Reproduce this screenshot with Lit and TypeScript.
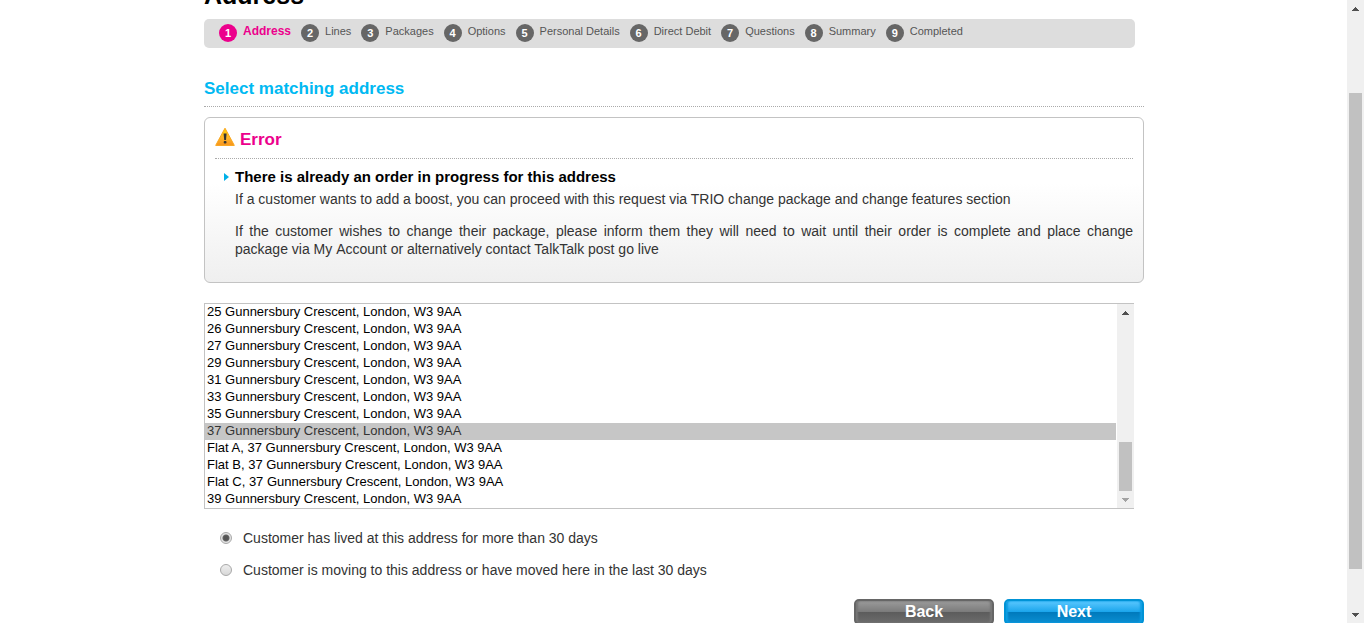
import { LitElement, html, css, svg } from "lit";
import { customElement, property, state } from "lit/decorators.js";
import { classMap } from "lit/directives/class-map.js";

const STEPS = [
  "Address",
  "Lines",
  "Packages",
  "Options",
  "Personal Details",
  "Direct Debit",
  "Questions",
  "Summary",
  "Completed",
];

const STREET = "Gunnersbury Crescent, London, W3 9AA";
const ADDRESSES = [
  "25",
  "26",
  "27",
  "29",
  "31",
  "33",
  "35",
  "37",
  "Flat A, 37",
  "Flat B, 37",
  "Flat C, 37",
  "39",
].map((n) => `${n} ${STREET}`);

const arrow = (up: boolean) => svg`<path d=${up ? "M0 4h7v-1h-1v-1h-1v-1h-1v-1h-1v1h-1v1h-1v1h-1z" : "M0 0h7v1h-1v1h-1v1h-1v1h-1v-1h-1v-1h-1v-1h-1z"} />`;

@customElement("scroll-track")
export class ScrollTrack extends LitElement {
  @property({ type: Number }) before = 0;
  @property({ type: Number }) thumb = 0;
  @property({ type: Number }) after = 0;
  @property({ type: Boolean }) atend = false;

  static styles = css`
    :host {
      display: flex;
      flex-direction: column;
      flex: none;
      width: 17px;
      background: #f0f0f0;
    }
    .end {
      height: 17px;
      flex: none;
      display: flex;
      align-items: center;
      justify-content: center;
    }
    .lane {
      flex: 1;
      display: flex;
      flex-direction: column;
      padding: 0 2px;
    }
    .thumb {
      background: #c1c1c1;
    }
    svg {
      fill: #505050;
    }
    .dim {
      fill: #a3a3a3;
    }
  `;

  render() {
    return html`
      <div class="end"><svg width="7" height="4">${arrow(true)}</svg></div>
      <div class="lane">
        <div style="flex:${this.before}"></div>
        <div class="thumb" style="flex:${this.thumb}"></div>
        <div style="flex:${this.after}"></div>
      </div>
      <div class="end">
        <svg class=${classMap({ dim: this.atend })} width="7" height="4">${arrow(false)}</svg>
      </div>
    `;
  }
}

@customElement("app-root")
export class AppRoot extends LitElement {
  @state() private chosen = 7;

  static styles = css`
    :host {
      display: flex;
      height: 100vh;
      overflow: hidden;
      background: #fff;
      color: #333;
      font: 14px/18px "Liberation Sans", Arial, sans-serif;
    }
    * {
      box-sizing: border-box;
    }
    .view {
      flex: 1;
      min-width: 0;
      padding-left: 1px;
      overflow: hidden;
    }
    main {
      max-width: 940px;
      margin: -19px auto 0;
    }
    h1 {
      margin: 0 0 10px;
      font-size: 25px;
      line-height: 28px;
      color: #000;
    }
    h2 {
      margin: 0;
      font-size: 17px;
      line-height: 24px;
    }
    .steps {
      display: flex;
      gap: 10px;
      list-style: none;
      margin: 0 9px 0 0;
      padding: 5px 15px;
      height: 29px;
      border-radius: 5px;
      background: #ddd;
      font-size: 11px;
      line-height: 15px;
      color: #555;
      white-space: nowrap;
    }
    .step {
      display: flex;
      gap: 6px;
    }
    .num {
      width: 18px;
      height: 18px;
      border-radius: 50%;
      background: #666;
      color: #fff;
      font-size: 11px;
      font-weight: bold;
      line-height: 19px;
      text-align: center;
    }
    .current {
      color: #ec008c;
      font-weight: bold;
      font-size: 12px;
    }
    .current .num {
      background: #ec008c;
    }
    .title {
      margin-top: 29px;
      padding-bottom: 5px;
      border-bottom: 1px dotted #aaa;
      color: #00b9f2;
    }
    .error {
      margin-top: 10px;
      padding: 9px 10px 24px;
      border: 1px solid #c3c3c3;
      border-radius: 6px;
      background: linear-gradient(#fff 40%, #efefef);
    }
    .error-head {
      display: flex;
      gap: 5px;
      padding-bottom: 5px;
      border-bottom: 1px dotted #aaa;
      color: #ec008c;
    }
    .error-head h2 {
      line-height: 26px;
    }
    .error-body {
      margin: 0;
      padding: 9px 0 0 20px;
      text-align: justify;
    }
    .lead {
      display: flex;
      align-items: center;
      gap: 6px;
      margin-left: -11px;
      color: #000;
      font-size: 15px;
    }
    .error-body p {
      margin: 4px 0 14px;
    }
    .error-body p + p {
      margin: 0;
    }
    .picker {
      display: flex;
      margin: 20px 10px 0 0;
      border: 1px solid #c3c3c3;
      border-right: 0;
    }
    select {
      flex: 1;
      min-width: 0;
      height: 204px;
      margin: 0 1px 0 0;
      padding: 0;
      border: 0;
      border-radius: 0;
      outline: 0;
      overflow: hidden;
      background: #fff;
      color: #000;
      font: 13px/17px "Liberation Sans", Arial, sans-serif;
    }
    option {
      height: 17px;
      min-height: 17px;
      padding: 0 2px;
      line-height: 17px;
    }
    option:checked {
      background: linear-gradient(#c6c6c6, #c6c6c6);
      color: #333;
    }
    .choices {
      margin: 20px 0 0;
      padding: 0 0 0 16px;
      border: 0;
      display: grid;
      gap: 14px;
    }
    .choice {
      display: flex;
      align-items: center;
      gap: 11px;
    }
    .choice input {
      appearance: none;
      width: 12px;
      height: 12px;
      margin: 0;
      border: 1px solid #a8a8a8;
      border-radius: 50%;
      background: linear-gradient(#eee, #d8d8d8);
    }
    .choice input:checked {
      background: radial-gradient(circle, #555 0 2px, #666 3px, #e4e4e4 4px);
    }
    .actions {
      display: flex;
      justify-content: flex-end;
      gap: 10px;
      margin-top: 20px;
    }
    button {
      width: 140px;
      height: 26px;
      padding: 0;
      border: 2px solid #666;
      border-radius: 5px;
      background: linear-gradient(#9b9b9b, #7c7c7c 48%, #5c5c5c 50%, #6c6c6c);
      box-shadow: inset 2px 0 2px #777, inset -2px 0 2px #777;
      color: #fff;
      font: bold 16px/20px "Liberation Sans", Arial, sans-serif;
    }
    .next {
      border-color: #0093d6;
      background: linear-gradient(#5cc8ff, #1ca6ec 48%, #0079bb 50%, #0a8fd2);
      box-shadow: inset 2px 0 2px #0d9ce2, inset -2px 0 2px #0d9ce2;
    }
  `;

  render() {
    return html`
      <div class="view">
        <main>
          <h1>Address</h1>
          <ol class="steps">
            ${STEPS.map(
              (label, i) => html`<li class=${classMap({ step: true, current: i === 0 })}>
                <span class="num">${i + 1}</span><span>${label}</span>
              </li>`
            )}
          </ol>
          <h2 class="title">Select matching address</h2>
          <section class="error">
            <div class="error-head">
              <svg width="20" height="20" viewBox="0 0 20 20" aria-hidden="true">
                <defs>
                  <linearGradient id="amber" x1="0" y1="0" x2="0" y2="1">
                    <stop offset="0" stop-color="#ffd200" />
                    <stop offset=".55" stop-color="#fdb62b" />
                    <stop offset="1" stop-color="#f7931e" />
                  </linearGradient>
                </defs>
                <path d="M10 1.2 19.3 18.4H.7z" fill="url(#amber)" stroke="#f9a51a" stroke-linejoin="round" />
                <path d="M8.6 6.5h3l-.6 6.4H9.2z" fill="#333" />
                <rect x="8.7" y="14" width="2.8" height="2.6" rx="1" fill="#333" />
              </svg>
              <h2>Error</h2>
            </div>
            <div class="error-body">
              <div class="lead">
                <svg width="5" height="8" viewBox="0 0 5 8" aria-hidden="true">
                  <path d="M0 0 5 4 0 8z" fill="#00b0e8" />
                </svg>
                <strong>There is already an order in progress for this address</strong>
              </div>
              <p>
                If a customer wants to add a boost, you can proceed with this request via TRIO change package and change
                features section
              </p>
              <p>
                If the customer wishes to change their package, please inform them they will need to wait until their
                order is complete and place change package&nbsp;via&nbsp;My&nbsp;Account or alternatively contact
                TalkTalk post go live
              </p>
            </div>
          </section>
          <div class="picker">
            <select
              size="12"
              aria-label="Matching address"
              @change=${(e: Event) => (this.chosen = (e.target as HTMLSelectElement).selectedIndex)}
            >
              ${ADDRESSES.map((a, i) => html`<option ?selected=${i === this.chosen}>${a}</option>`)}
            </select>
            <scroll-track before="121" thumb="49" after="0" atend></scroll-track>
          </div>
          <fieldset class="choices">
            <label class="choice">
              <input type="radio" name="residence" checked />
              Customer has lived at this address for more than 30 days
            </label>
            <label class="choice">
              <input type="radio" name="residence" />
              Customer is moving to this address or have moved here in the last 30 days
            </label>
          </fieldset>
          <div class="actions">
            <button type="button">Back</button>
            <button type="button" class="next">Next</button>
          </div>
        </main>
      </div>
      <scroll-track before="76" thumb="476" after="37"></scroll-track>
    `;
  }
}
